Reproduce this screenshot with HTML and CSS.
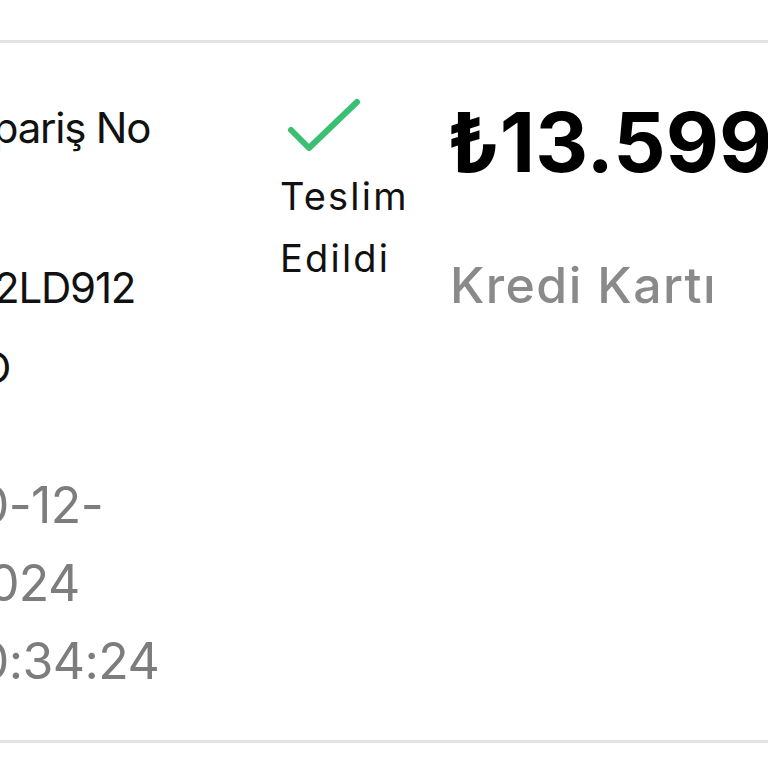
FILE: index.html
```html
<!DOCTYPE html>
<html lang="tr">
<head>
<meta charset="utf-8">
<title>Sipariş</title>
<link rel="stylesheet" href="styles.css">
</head>
<body>
<div class="card">
  <div class="col col-order">
    <div class="order-lines">
      <div class="line">Sipariş No</div>
      <div class="line">#</div>
      <div class="line">I42LD912</div>
      <div class="line">LO</div>
    </div>
    <div class="date">10-12-<wbr>2024 10:34:24</div>
  </div>
  <div class="col col-status">
    <svg class="check" viewBox="0 0 80 60" width="80" height="60" aria-hidden="true">
      <polyline points="9,37 27,55 75,9" fill="none" stroke="#3bbf73" stroke-width="6" stroke-linecap="round" stroke-linejoin="round"/>
    </svg>
    <div class="status">Teslim<br>Edildi</div>
  </div>
  <div class="col col-price">
    <div class="price">₺13.599,00</div>
    <div class="method">Kredi Kartı</div>
  </div>
</div>
</body>
</html>
```
FILE: styles.css
```css
html, body {
  margin: 0;
  padding: 0;
  background: #ffffff;
}
body {
  width: 768px;
  height: 768px;
  overflow: hidden;
  font-family: Inter, "Noto Sans", "DejaVu Sans", sans-serif;
}
.card {
  margin-top: 40px;
  height: 697px;
  border-top: 3px solid #e3e3e3;
  border-bottom: 3px solid #e3e3e3;
  display: flex;
  align-items: flex-start;
  overflow: hidden;
}
.col-order {
  flex: 0 0 322px;
  margin-left: -42px;
  padding-top: 45px;
}
.order-lines {
  font-size: 42px;
  line-height: 80px;
  letter-spacing: -1.2px;
  color: #111;
  white-space: nowrap;
}
.date {
  margin-top: 58px;
  width: 215px;
  font-size: 50px;
  line-height: 78px;
  letter-spacing: -0.6px;
  color: #7d7d7d;
}
.col-status {
  flex: 0 0 170px;
  padding-top: 50px;
}
.check {
  display: block;
  margin-left: 2px;
}
.status {
  margin-top: 12px;
  font-size: 38px;
  line-height: 62px;
  letter-spacing: 2.2px;
  color: #111;
}
.col-price {
  flex: 0 0 auto;
  padding-top: 51px;
  white-space: nowrap;
}
.price {
  font-size: 82px;
  font-weight: 700;
  line-height: 98px;
  margin-left: -3px;
  color: #000;
}
.method {
  margin-top: 63px;
  font-size: 50px;
  font-weight: 500;
  line-height: 60px;
  letter-spacing: 1.4px;
  color: #8a8a8a;
}
```
